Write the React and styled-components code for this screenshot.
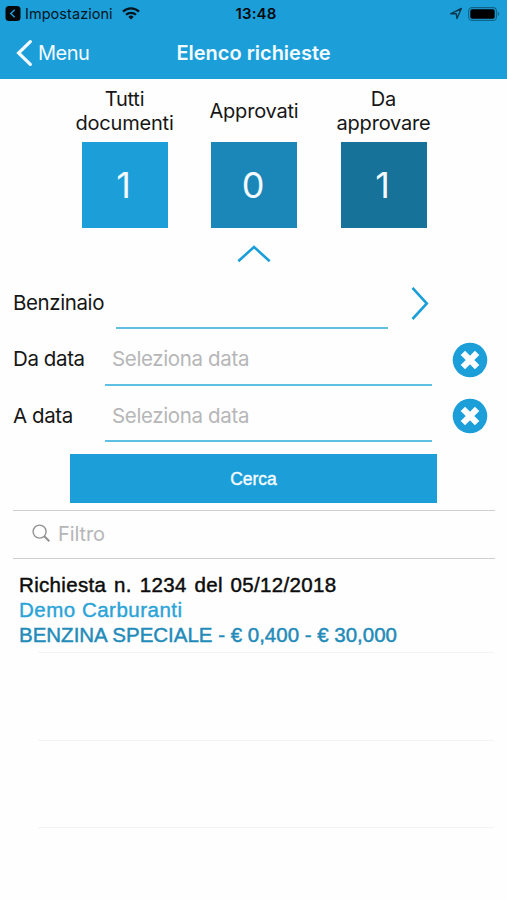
import React from 'react';
import styled, { createGlobalStyle } from 'styled-components';

const colors = {
  primary: '#1c9fd9',
  primaryDark: '#1b87b8',
  primaryDeeper: '#177299',
  line: '#5fc0e2',
  text: '#161616',
  placeholder: '#b6b6b8',
  border: '#cfcfd0',
};

const GlobalStyle = createGlobalStyle`
  * {
    box-sizing: border-box;
  }

  body {
    margin: 0;
    background: #fefefe;
    font-family: Inter, Roboto, sans-serif;
    color: ${colors.text};
  }
`;

const Screen = styled.div`
  width: 507px;
  height: 900px;
  overflow: hidden;
  background: #fefefe;
`;

const Header = styled.header`
  height: 79px;
  background: ${colors.primary};
`;

const StatusBar = styled.div`
  display: grid;
  grid-template-columns: 1fr auto 1fr;
  align-items: center;
  height: 27px;
  padding: 0 7px 0 5px;
  color: #04151e;
  font-size: 14.5px;
`;

const StatusLeft = styled.div`
  display: flex;
  align-items: center;
`;

const BackApp = styled.span`
  margin: 0 9px 0 4px;
  letter-spacing: 0.05px;
`;

const Clock = styled.span`
  padding-left: 7px;
  font-weight: 600;
  font-size: 15px;
  letter-spacing: 0.15px;
  color: #04080b;
`;

const StatusRight = styled.div`
  display: flex;
  align-items: center;
  justify-content: flex-end;
  gap: 6px;
`;

const NavBar = styled.div`
  display: grid;
  grid-template-columns: 1fr auto 1fr;
  align-items: center;
  height: 52px;
  padding: 0 16px;
  color: #f4fbff;
`;

const BackButton = styled.button`
  display: flex;
  align-items: center;
  gap: 5px;
  padding: 0;
  border: none;
  background: none;
  color: inherit;
  font: 400 20px/24px Inter, sans-serif;
  letter-spacing: -0.5px;
`;

const Title = styled.h1`
  margin: 0;
  font-size: 20px;
  line-height: 24px;
  font-weight: 600;
  letter-spacing: -0.01px;
`;

const Stats = styled.section`
  display: flex;
  justify-content: center;
  gap: 19.5px;
  padding: 7px 0 0 1px;
`;

const Stat = styled.div`
  width: 110px;
  display: flex;
  flex-direction: column;
  align-items: center;
`;

const StatLabel = styled.div`
  width: 102px;
  height: 56px;
  padding-bottom: 7px;
  display: flex;
  align-items: center;
  justify-content: center;
  text-align: center;
  font-size: 20px;
  line-height: 24px;
  letter-spacing: -0.2px;
`;

const StatBox = styled.div`
  width: 86px;
  height: 86px;
  display: flex;
  align-items: center;
  justify-content: center;
  padding-right: 2px;
  background: ${({ $tone }) => $tone};
  color: #f2faff;
  font-size: 36px;
  font-weight: 400;
`;

const Collapse = styled.div`
  display: flex;
  justify-content: center;
  height: 45px;
  padding-top: 16px;
`;

const Field = styled.div`
  display: flex;
  height: ${({ $height }) => $height || 56}px;
  padding-left: 13px;
`;

const FieldLabel = styled.label`
  width: ${({ $width }) => $width}px;
  padding-top: 17px;
  font-size: 20.5px;
  line-height: 26px;
  letter-spacing: -0.4px;
  white-space: nowrap;
`;

const FieldValue = styled.div`
  width: ${({ $width }) => $width}px;
  padding: 17px 8px 0 7px;
  border-bottom: 2px solid ${colors.line};
  color: ${colors.placeholder};
  font-size: 20.5px;
  line-height: 26px;
  letter-spacing: -0.36px;
`;

const FieldAction = styled.div`
  padding-top: 12.5px;
  margin-left: ${({ $gap }) => $gap}px;
`;

const SearchButton = styled.button`
  display: block;
  width: 367px;
  height: 49px;
  margin: 12px auto 7px;
  padding: 2px 0 0;
  border: none;
  background: ${colors.primary};
  color: #f4fbff;
  font-family: 'Liberation Sans', sans-serif;
  font-size: 17.5px;
  -webkit-text-stroke: 0.4px #f4fbff;
`;

const Filter = styled.div`
  display: flex;
  align-items: center;
  gap: 7px;
  height: 49px;
  margin: 0 12px 0 13px;
  padding: 0 0 2px 19px;
  border-top: 1px solid ${colors.border};
  border-bottom: 1px solid ${colors.border};
  color: ${colors.placeholder};
  font-size: 20px;
  letter-spacing: -0.1px;
`;

const Request = styled.article`
  height: 93px;
  padding: 13px 0 0 19px;
  font-family: 'Liberation Sans', sans-serif;
  font-size: 20.5px;
  line-height: 25px;
  white-space: nowrap;
`;

const RequestLine = styled.div`
  color: ${({ $color }) => $color};
  letter-spacing: ${({ $spacing }) => $spacing}px;
  word-spacing: ${({ $words }) => $words || 0}px;
  -webkit-text-stroke: ${({ $stroke }) => $stroke}px currentColor;
`;

const Row = styled.div`
  height: 87.5px;
  margin: 0 13px 0 38px;
  border-top: 1px solid #f3f3f3;
`;

const stats = [
  { label: 'Tutti documenti', value: 1, tone: colors.primary },
  { label: 'Approvati', value: 0, tone: colors.primaryDark },
  { label: 'Da approvare', value: 1, tone: colors.primaryDeeper },
];

const BackAppIcon = () => (
  <svg width="16" height="15" viewBox="0 0 16 15">
    <rect x="0.5" y="0" width="15" height="15" rx="3.5" fill="#04080b" />
    <path d="M9.7 3.8 5.8 7.5l3.9 3.7" fill="none" stroke={colors.primary} strokeWidth="1.5" />
  </svg>
);

const WifiIcon = () => (
  <svg width="18" height="13" viewBox="0 0 18 13" fill="none" stroke="#04151e" strokeWidth="2.2">
    <path d="M1 4.6a11.5 11.5 0 0 1 16 0" />
    <path d="M4 7.8a7.2 7.2 0 0 1 10 0" />
    <path d="M9 12.6 6.3 9.9a3.9 3.9 0 0 1 5.4 0Z" fill="#04151e" stroke="none" />
  </svg>
);

const LocationIcon = () => (
  <svg width="13" height="13" viewBox="0 0 13 13">
    <path
      d="M1.6 6.8 12.3 1.5 8 11.6 7.2 6.6Z"
      fill="none"
      stroke="#0a3850"
      strokeWidth="1.4"
      strokeLinejoin="round"
    />
  </svg>
);

const BatteryIcon = () => (
  <svg width="32" height="14" viewBox="0 0 32 14">
    <rect x="0.6" y="0.6" width="27.8" height="12.8" rx="3.5" fill="none" stroke="#116287" strokeWidth="1.1" />
    <rect x="2.3" y="2.3" width="24.4" height="9.4" rx="1.8" fill="#000" />
    <path d="M29.8 4.8c1.8.6 1.8 3.8 0 4.4Z" fill="#116287" />
  </svg>
);

const BackIcon = () => (
  <svg width="17" height="26" viewBox="0 0 17 26">
    <path d="M14.3 1.7 2.6 13l11.7 11.3" fill="none" stroke="currentColor" strokeWidth="3.2" strokeLinecap="round" />
  </svg>
);

const ChevronUp = () => (
  <svg width="34" height="19" viewBox="0 0 34 19">
    <path d="M1.3 17.2 17 3l15.7 14.2" fill="none" stroke={colors.primary} strokeWidth="2.6" />
  </svg>
);

const ChevronRight = () => (
  <svg width="18" height="34" viewBox="0 0 18 34">
    <path d="M1.5 1.9 15.8 17.5 1.5 33" fill="none" stroke={colors.primary} strokeWidth="2.6" />
  </svg>
);

const ClearIcon = () => (
  <svg width="36" height="36" viewBox="0 0 36 36">
    <circle cx="18" cy="18" r="17.3" fill={colors.primary} />
    <path
      d="m10.9 10.9 14.2 14.2M25.1 10.9 10.9 25.1"
      stroke="#fefefe"
      strokeWidth="6.2"
      strokeLinecap="butt"
    />
  </svg>
);

const SearchIcon = () => (
  <svg width="19" height="19" viewBox="0 0 19 19" fill="none" stroke="#929294">
    <circle cx="7.6" cy="7.6" r="6.5" strokeWidth="1.4" />
    <path d="m12.3 12.3 5 5" strokeWidth="2" />
  </svg>
);

const DateField = ({ label, height }) => (
  <Field $height={height}>
    <FieldLabel $width={92}>{label}</FieldLabel>
    <FieldValue $width={327}>Seleziona data</FieldValue>
    <FieldAction $gap={20}>
      <ClearIcon />
    </FieldAction>
  </Field>
);

const App = () => (
  <Screen>
    <GlobalStyle />
    <Header>
      <StatusBar>
        <StatusLeft>
          <BackAppIcon />
          <BackApp>Impostazioni</BackApp>
          <WifiIcon />
        </StatusLeft>
        <Clock>13:48</Clock>
        <StatusRight>
          <LocationIcon />
          <BatteryIcon />
        </StatusRight>
      </StatusBar>
      <NavBar>
        <BackButton>
          <BackIcon />
          Menu
        </BackButton>
        <Title>Elenco richieste</Title>
      </NavBar>
    </Header>

    <Stats>
      {stats.map(({ label, value, tone }) => (
        <Stat key={label}>
          <StatLabel>{label}</StatLabel>
          <StatBox $tone={tone}>{value}</StatBox>
        </Stat>
      ))}
    </Stats>

    <Collapse>
      <ChevronUp />
    </Collapse>

    <Field>
      <FieldLabel $width={103}>Benzinaio</FieldLabel>
      <FieldValue $width={272} />
      <FieldAction $gap={23}>
        <ChevronRight />
      </FieldAction>
    </Field>
    <DateField label="Da data" height={56.5} />
    <DateField label="A data" height={56.5} />

    <SearchButton>Cerca</SearchButton>

    <Filter>
      <SearchIcon />
      Filtro
    </Filter>

    <Request>
      <RequestLine $color="#0c0c0c" $spacing={0.33} $words={1.8} $stroke={0.45}>
        Richiesta n. 1234 del 05/12/2018
      </RequestLine>
      <RequestLine $color="#2aa3d8" $spacing={0.5} $stroke={0.4}>
        Demo Carburanti
      </RequestLine>
      <RequestLine $color="#238bb9" $spacing={-0.01} $stroke={0.45}>
        BENZINA SPECIALE - € 0,400 - € 30,000
      </RequestLine>
    </Request>
    <Row />
    <Row />
    <Row />
  </Screen>
);

export default App;
